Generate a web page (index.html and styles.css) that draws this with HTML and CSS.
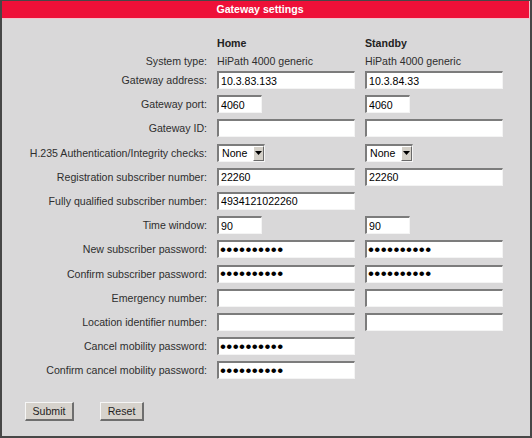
FILE: index.html
```html
<!DOCTYPE html>
<html lang="en">
<head>
<meta charset="utf-8">
<title>Gateway settings</title>
<link rel="stylesheet" href="styles.css">
</head>
<body>
<div class="frame">
  <div class="header">Gateway settings</div>
  <form class="form">
    <div class="grid">
      <div></div>
      <div class="colhead">Home</div>
      <div class="colhead">Standby</div>

      <div class="label info">System type:</div>
      <div class="info">HiPath 4000 generic</div>
      <div class="info">HiPath 4000 generic</div>

      <div class="label">Gateway address:</div>
      <div><input class="field wide" type="text" value="10.3.83.133"></div>
      <div><input class="field wide" type="text" value="10.3.84.33"></div>

      <div class="label">Gateway port:</div>
      <div><input class="field short" type="text" value="4060"></div>
      <div><input class="field short" type="text" value="4060"></div>

      <div class="label">Gateway ID:</div>
      <div><input class="field wide" type="text" value=""></div>
      <div><input class="field wide" type="text" value=""></div>

      <div class="label">H.235 Authentication/Integrity checks:</div>
      <div><span class="select-wrap"><select class="select"><option>None</option></select><span class="arrow"><svg width="7" height="4" viewBox="0 0 7 4"><path d="M0 0H7L3.5 4Z" fill="#000"/></svg></span></span></div>
      <div><span class="select-wrap"><select class="select"><option>None</option></select><span class="arrow"><svg width="7" height="4" viewBox="0 0 7 4"><path d="M0 0H7L3.5 4Z" fill="#000"/></svg></span></span></div>

      <div class="label">Registration subscriber number:</div>
      <div><input class="field wide" type="text" value="22260"></div>
      <div><input class="field wide" type="text" value="22260"></div>

      <div class="label">Fully qualified subscriber number:</div>
      <div><input class="field wide" type="text" value="4934121022260"></div>
      <div></div>

      <div class="label">Time window:</div>
      <div><input class="field short" type="text" value="90"></div>
      <div><input class="field short" type="text" value="90"></div>

      <div class="label">New subscriber password:</div>
      <div><input class="field wide pw" type="password" value="1234567890"></div>
      <div><input class="field wide pw" type="password" value="1234567890"></div>

      <div class="label">Confirm subscriber password:</div>
      <div><input class="field wide pw" type="password" value="1234567890"></div>
      <div><input class="field wide pw" type="password" value="1234567890"></div>

      <div class="label">Emergency number:</div>
      <div><input class="field wide" type="text" value=""></div>
      <div><input class="field wide" type="text" value=""></div>

      <div class="label">Location identifier number:</div>
      <div><input class="field wide" type="text" value=""></div>
      <div><input class="field wide" type="text" value=""></div>

      <div class="label">Cancel mobility password:</div>
      <div><input class="field wide pw" type="password" value="1234567890"></div>
      <div></div>

      <div class="label">Confirm cancel mobility password:</div>
      <div><input class="field wide pw" type="password" value="1234567890"></div>
      <div></div>
    </div>
    <div class="buttons">
      <button type="button" class="btn submit">Submit</button>
      <button type="button" class="btn reset">Reset</button>
    </div>
  </form>
</div>
</body>
</html>
```
FILE: styles.css
```css
html, body {
  margin: 0;
  padding: 0;
}

body {
  font-family: "Liberation Sans", Arial, sans-serif;
  font-size: 10.6px;
  color: #2e2e2e;
  background: #d9d8d9;
}

.frame {
  box-sizing: border-box;
  width: 532px;
  height: 438px;
  background: #d9d8d9;
  border: 2px solid #474747;
  border-top-width: 1px;
}

.header {
  height: 17px;
  line-height: 17px;
  background: #ee1038;
  color: #ffffff;
  font-weight: bold;
  text-align: center;
  padding-right: 11px;
  border-bottom: 1px solid #f1c3cb;
  border-right: 1px solid #f1c3cb;
}

.form {
  margin: 15px 0 0 0;
}

.grid {
  display: grid;
  grid-template-columns: 215px 148px 1fr;
  grid-template-rows: 18px 19px;
  grid-auto-rows: 24.2px;
}

.colhead {
  font-weight: bold;
  line-height: 18px;
  color: #222;
}

.info {
  line-height: 19px;
}

.label {
  text-align: right;
  padding-right: 10px;
  line-height: 18px;
  white-space: nowrap;
}

.field {
  box-sizing: border-box;
  height: 18px;
  margin: 0;
  padding: 0 2px;
  font-family: "Liberation Sans", Arial, sans-serif;
  font-size: 10.6px;
  color: #000;
  background: #ffffff;
  border-top: 2px solid #7c7c7c;
  border-left: 2px solid #7c7c7c;
  border-right: 1px solid #f4f4f4;
  border-bottom: 1px solid #f4f4f4;
  outline: none;
  display: block;
}

.wide {
  width: 138px;
}

.short {
  width: 45px;
}

.pw {
  font-size: 17px;
  letter-spacing: 0.4px;
  padding-left: 1px;
}

.select-wrap {
  position: relative;
  display: inline-block;
  vertical-align: top;
}

.select {
  box-sizing: border-box;
  -webkit-appearance: none;
  appearance: none;
  width: 48px;
  height: 18px;
  margin: 0;
  padding: 0 0 0 3px;
  font-family: "Liberation Sans", Arial, sans-serif;
  font-size: 10.6px;
  color: #000;
  background: #ffffff;
  border-top: 2px solid #7c7c7c;
  border-left: 2px solid #7c7c7c;
  border-right: 1px solid #f4f4f4;
  border-bottom: 1px solid #f4f4f4;
  border-radius: 0;
  outline: none;
  display: block;
}

.arrow {
  position: absolute;
  top: 2px;
  right: 1px;
  bottom: 1px;
  width: 11px;
  box-sizing: border-box;
  background: #d4d0c8;
  border-top: 1px solid #ffffff;
  border-left: 1px solid #ffffff;
  border-right: 1px solid #6a6a6a;
  border-bottom: 1px solid #6a6a6a;
  display: flex;
  align-items: center;
  justify-content: center;
  pointer-events: none;
}

.buttons {
  display: flex;
  gap: 26px;
  margin-top: 17px;
  padding-left: 23px;
}

.btn {
  box-sizing: border-box;
  height: 19px;
  margin: 0;
  padding: 0;
  font-family: "Liberation Sans", Arial, sans-serif;
  font-size: 10.6px;
  color: #1e1e1e;
  background: #d6d2cc;
  border-top: 1px solid #f6f6f6;
  border-left: 1px solid #f6f6f6;
  border-right: 2px solid #6e6e6e;
  border-bottom: 2px solid #6e6e6e;
  border-radius: 0;
}

.submit {
  width: 49px;
}

.reset {
  width: 44px;
}
```
